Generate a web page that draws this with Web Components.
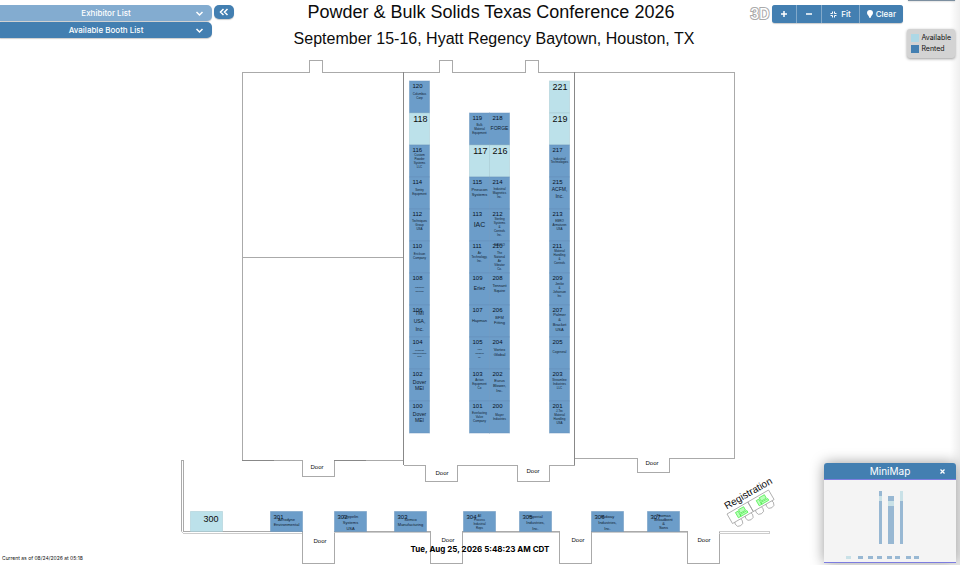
<!DOCTYPE html>
<html lang="en">
<head>
<meta charset="utf-8">
<title>Powder &amp; Bulk Solids Texas Conference 2026 – Floor Plan</title>
<style>
html,body{margin:0;height:100%;background:#fff}
body{font-family:Inter,"Liberation Sans",sans-serif;color:#111}
</style>
</head>
<body>
<floor-app></floor-app>
<script>
class Base extends HTMLElement{
  constructor(){super();this.attachShadow({mode:"open"}).innerHTML=this.render();}
}
// each booth: number, label size, first label baseline, line pitch, label lines
const COLS=[
 {x:409,row:0,b:[
  ["120",3,14,4,"Columbus|Corp"],["118"],["116",3,11,4,"Custom|Powder|Systems|LLC"],["114",3,14,4,"Sentry|Equipment"],
  ["112",3,13,4,"Techniques|Group|USA"],["110",3,14,4,"Erickson|Company"],["108",2,15,4,"Ingredient|Solutions"],
  ["106",6,10,8,"TMI|USA,|Inc."],["104",2,14,3,"Metalcraft|Instrumentation|Corp"],["102",5,15,6,"Dover|MEI"],["100",5,15,6,"Dover|MEI"]]},
 {x:469,row:1,b:[
  ["119",3,13,4,"Bulk|Material|Equipment"],["117"],["115",4,14,5,"Pneucon|Systems"],["113",7,18,8,"IAC"],
  ["111",3,13,4,"Air|Technology,|Inc."],["109",5,17,5,"Eriez"],["107",4,17,5,"Hapman"],
  ["105",2,13,4,"Vibra|Industries|Inc."],["103",3,12,4,"Action|Equipment|Co"],["101",3,13,4,"Everlasting|Valve|Company"]]},
 {x:489,row:1,b:[
  ["218",5,17,6,"FORGE"],["216"],["214",3,13,4,"Industrial|Magnetics|Inc."],["212",3,11,4,"Sterling|Systems|&|Controls|Inc."],
  ["210",3,5,4,"NAVCO|-|The|National|Air|Vibrator|Co."],["208",4,14,5,"Tennant|Squire"],["206",4,14,5,"BFM|Fitting"],
  ["204",4,14,5,"Vortex|Global"],["202",4,13,5,"Eurus|Blower,|Inc."],["200",3,15,4,"Mayer|Industries"]]},
 {x:549,row:0,b:[
  ["221"],["219"],["217",3,15,3,"Industrial|Technologies"],["215",5,14,7,"ACFM,|Inc."],["213",3,13,4,"EBRO|Armaturen|USA"],
  ["211",3,11,4,"Material|Handling|&|Controls"],["209",3,12,4,"Jenike|&|Johanson|Inc"],["207",4,11,5,"Palmer|&|Bracket|USA"],
  ["205",3,16,4,"Cogeneral"],["203",3,12,4,"Streamline|Industries|LLC"],["201",3,11,4,"J-Tec|Material|Handling|USA"]]}
];
const ROWB=[
 [190,"300"],[270,"301",4,9,5,"Aerodyne|Environmental"],[334,"302",4,6,6,"Zeppelin|Systems|USA"],[394,"303",4,9,5,"Semco|Manufacturing"],
 [463,"304",3,5,4,"All|Process|Industrial|Reps"],[519,"305",4,6,6,"Imperial|Industries,|Inc."],[591,"306",4,6,6,"Midway|Industries,|Inc."],[647,"307",4,5,4,"Thomas|Broadbent|&|Sons"]
];
const esc=s=>s.replace(/&/g,"&amp;");
function booth(x,y,w,h,[n,size,off,pitch,label]){
  const free=!label;
  let s=`<rect x="${x}" y="${y}" width="${w}" height="${h}" fill="${free?"#bce1ea":"#6c9dc9"}" stroke="${free?"#a3c8d2":"#6592bb"}" stroke-opacity=".5"/>`;
  s+=free?`<text class="free" x="${w>h?x+w-4:x+w-2}" y="${y+(w>h?10:9)}">${n}</text>`
         :`<text class="num" x="${x+3}" y="${y+7}">${n}</text>`;
  if(!free)label.split("|").forEach((t,i)=>{s+=`<text class="who s${size}" x="${x+(w>h?16:10)}" y="${y+off+pitch*i}">${esc(t)}</text>`;});
  return s;
}
customElements.define("floor-plan",class extends Base{
  render(){
    const doors=[[317,469],[442,475],[533,473],[652,465],[320,543],[448,542],[578,542],[704,542]];
    return `<style>
:host{display:block;height:100%}
svg{display:block;width:100%;height:100%;font-family:"Liberation Sans",Arial,sans-serif}
.wall{fill:none;stroke:#aaa;shape-rendering:crispEdges}
.dark{stroke:#888}.pale{stroke:#ccc}
text{fill:#0c0c0c}
.h1{font-size:18px;text-anchor:middle}.h2{font-size:16px;text-anchor:middle}
.free{font-size:9px;text-anchor:end}
.num{font-size:6px;fill:#08121c}
.who{text-anchor:middle;fill:#10202e}
.s2{font-size:2px}.s3{font-size:3px}.s4{font-size:4px}.s5,.s6{font-size:5px}.s7{font-size:7px}
.door{font-size:6px;text-anchor:middle}
.reg{font-size:10px}
</style>
<svg viewBox="0 0 960 565" role="img" aria-label="Floor plan">
<text class="h1" x="491" y="18">Powder &amp; Bulk Solids Texas Conference 2026</text>
<text class="h2" x="494" y="44">September 15-16, Hyatt Regency Baytown, Houston, TX</text>
<path class="wall" d="M403.500 72.500H322.500V60.500H309.500V72.500H242.500V460.500H302.500V476.500H334.500V460.500H403.500M242.500 257.500H403.500M403.500 72.500H439.500V60.500H452.500V72.500H525.500V60.500H538.500V72.500H734.500V458.500H669.500V472.500H637.500V458.500H574.500M403.500 465.500H425.500V481.500H457.500V465.500H517.500V481.500H549.500V465.500H574.500"/>
<path class="wall dark" d="M403.500 72V465M574.500 72V465M242 460.500H274M334 460.500H366"/>
<path class="wall" d="M181.500 532V460.500H183.500V531.500H302.500V563.500H334.500V531.500H430.500V563.500H462.500V531.500H559.500V563.500H591.500V531.500H687.500V563.500H719.500V531.500"/>
<path class="wall pale" d="M181.500 531.500L183.500 533.500H302M334 532.500H430M463 532.500H559M592 532.500H687M719 531.500H769.500V533.500H719"/>
${COLS.map(c=>c.b.map((b,i)=>booth(c.x+.5,81+32*(c.row+i),20,32,b)).join("")).join("")}
${ROWB.map(([x,...b])=>booth(x+.5,511.5,32,20,b)).join("")}
${doors.map(([x,y])=>`<text class="door" x="${x}" y="${y}">Door</text>`).join("")}
<g transform="translate(727 514) rotate(-30)">
<text class="reg" x="2" y="-4">Registration</text>
<g fill="#fff" stroke="#999" stroke-width=".7">
<circle cx="6" cy="13" r="4"/><circle cx="18" cy="13" r="4"/><circle cx="30" cy="13" r="4"/><circle cx="42" cy="13" r="4"/>
<path d="M0 0H24V11H0ZM24 0H48V11H24Z"/></g>
<g fill="#b9ffb9" stroke="#49ed49" stroke-width=".7"><path d="M8 3H11V9H8ZM12 2H18V6H12ZM11 7H19V9H11Z"/><path d="M32 3H35V9H32ZM36 2H42V6H36ZM35 7H43V9H35Z"/></g>
</g>
</svg>`;}
});
customElements.define("list-panel",class extends Base{
  render(){return `<style>
:host{display:block}
button{display:grid;grid-template-columns:9px 1fr 9px;align-items:center;width:100%;height:16px;border:0;padding:0 8px;border-radius:0 5px 5px 0;background:var(--bar,#437fb1);color:#fff;font:500 8px Inter,sans-serif;box-shadow:0 1px 1px #0003}
span{grid-column:2;text-align:center}svg{width:9px;height:9px}
</style><button type="button"><span><slot></slot></span><svg viewBox="0 0 9 9" fill="none" stroke="#fff" stroke-width="1.500"><path d="M1.500 3L4.500 6L7.500 3"/></svg></button>`;}
});
customElements.define("side-lists",class extends Base{
  render(){return `<style>
:host{display:flex;gap:2px;align-items:flex-start}
.l{width:212px;display:grid;gap:1px}
.first{--bar:#83acd0}
.c{width:20px;height:14px;padding:0;border:0;border-radius:5px;background:#437fb1;display:grid;place-items:center;box-shadow:0 1px 1px #0003}
</style><div class="l"><list-panel class="first">Exhibitor List</list-panel><list-panel>Available Booth List</list-panel></div>
<button class="c" type="button" aria-label="Collapse lists"><svg width="10" height="8" viewBox="0 0 10 8" fill="none" stroke="#fff" stroke-width="1.500"><path d="M4.500 1L1.500 4L4.500 7M8.500 1L5.500 4L8.500 7"/></svg></button>`;}
});
customElements.define("map-toolbar",class extends Base{
  render(){return `<style>
:host{display:flex;align-items:center;gap:3px}
.d{border:0;background:none;padding:0;font:500 14px/18px Inter,sans-serif;color:#fff;-webkit-text-stroke:2px #aaa;paint-order:stroke fill}
.g{display:flex;gap:1px;border-radius:3px;overflow:hidden;background:#82a9ca;box-shadow:0 1px 1px #0003}
.g button{border:0;height:18px;min-width:24px;padding:0 8px;background:#437fb1;color:#fff;font:500 8px Inter,sans-serif;display:flex;align-items:center;justify-content:center;gap:4px}
.g .n{gap:3px;padding:0 7px}
svg{fill:none;stroke:#fff}
</style><button class="d" type="button">3D</button><div class="g">
<button type="button" aria-label="Zoom in"><svg width="8" height="8" stroke-width="1.500"><path d="M4 1V7M1 4H7"/></svg></button>
<button type="button" aria-label="Zoom out"><svg width="8" height="8" stroke-width="1.500"><path d="M1 4H7"/></svg></button>
<button type="button"><svg width="7" height="7" viewBox="0 0 7 7"><path d="M.500 2.500H2.500V.500M4.500 .500V2.500H6.500M6.500 4.500H4.500V6.500M2.500 6.500V4.500H.500"/></svg>Fit</button>
<button type="button" class="n"><svg width="6" height="8" viewBox="0 0 6 8"><path fill="#fff" stroke="none" d="M3 0A3 3 0 0 1 6 3C6 4.500 4 6 3.500 8H2.500C2 6 0 4.500 0 3A3 3 0 0 1 3 0Z"/></svg>Clear</button></div>`;}
});
customElements.define("map-legend",class extends Base{
  render(){return `<style>
:host{display:grid;gap:3px;padding:5px 4px;border-radius:3px;background:#d3d3d3;box-shadow:0 1px 3px #0006;font:7px/8px Inter,sans-serif}
div{display:flex;gap:2px;align-items:center}i{width:8px;height:8px;background:#add8e6}.r{background:#437fb1}
</style><div><i></i>Available</div><div><i class="r"></i>Rented</div>`;}
});
customElements.define("mini-map",class extends Base{
  render(){
    const bars=[34,44,53,63,71,82,90].map(x=>`<rect x="${x}" y="76" width="5" height="3"/>`).join("");
    return `<style>
:host{display:block;width:132px;border-radius:3px 3px 0 0;background:#f4f4f4;box-shadow:0 0 14px #0006;border-bottom:1px solid #7d7de0}
header{display:flex;align-items:center;height:16px;background:#437fb1;color:#fff;border-bottom:1px solid #7d7de0;border-radius:3px 3px 0 0;font:10px Inter,sans-serif;padding:0 8px 0 20px}
h2{flex:1;margin:0;text-align:center;font:inherit}
button{border:0;background:none;color:#fff;padding:0;width:12px;height:12px;display:grid;place-items:center}
svg{display:block}
</style><header><h2>MiniMap</h2><button type="button" aria-label="Close"><svg width="5" height="5" stroke="#fff" stroke-width="1.300"><path d="M.500 .500L4.500 4.500M4.500 .500L.500 4.500"/></svg></button></header>
<svg width="132" height="82" viewBox="0 0 132 82"><g fill="#98b8d3">
<rect x="55" y="11" width="3" height="53"/><rect x="64" y="16" width="6" height="48"/><rect x="76" y="11" width="3" height="53"/>${bars}</g>
<g fill="#c9e1e7"><rect x="55" y="16" width="3" height="5"/><rect x="64" y="21" width="6" height="5"/><rect x="76" y="11" width="3" height="10"/><rect x="22" y="76" width="5" height="3"/></g></svg>`;}
});
customElements.define("floor-app",class extends Base{
  render(){return `<style>
:host{display:block;position:relative;height:100vh;overflow:hidden}
.o{position:absolute}
.lists{left:0;top:5px}
.tools{right:57px;top:5px}
.legend{right:5px;top:29px}
.tab{right:5px;top:0;width:47px;height:1px;background:#7c8fa0;box-shadow:0 0 2px #0006}
.mini{right:4px;bottom:2px}
.edge{right:0;top:0;bottom:0;width:10px;background:linear-gradient(90deg,#0000,#0001)}
.now{left:0;right:0;bottom:10px;text-align:center;font:700 8px/12px Inter,sans-serif;color:#000}
.asof{left:2px;bottom:3px;font:5px/8px Inter,sans-serif}
</style>
<floor-plan></floor-plan>
<div class="o edge"></div><div class="o tab"></div>
<side-lists class="o lists"></side-lists>
<map-toolbar class="o tools"></map-toolbar>
<map-legend class="o legend"></map-legend>
<mini-map class="o mini"></mini-map>
<div class="o now">Tue, Aug 25, 2026 5:48:23 AM CDT</div>
<div class="o asof">Current as of 08/24/2026 at 05:18</div>`;}
});
</script>
</body>
</html>
